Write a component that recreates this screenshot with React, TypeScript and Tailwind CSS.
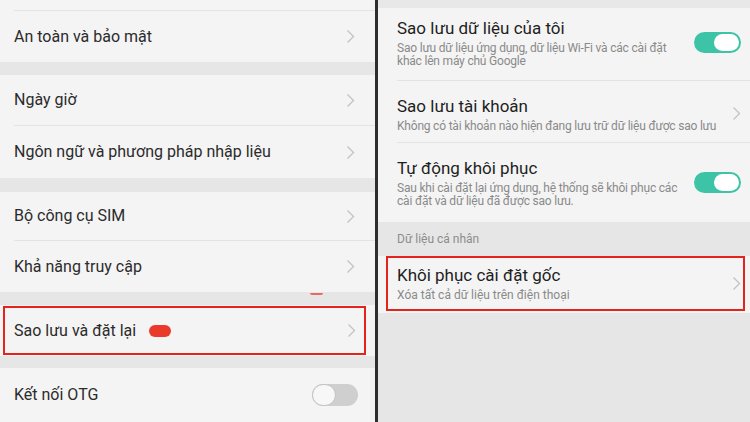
import React from 'react';

const font = { fontFamily: 'Roboto, "Noto Sans", "Liberation Sans", sans-serif' };

const Chevron = ({ className = '' }: { className?: string }) => (
    <svg width="9" height="15" viewBox="0 0 9 15" className={className}>
        <polyline points="1.5,1.5 7.5,7.5 1.5,13.5" fill="none" stroke="#c2c2c2" strokeWidth="1.3" />
    </svg>
);

const ToggleOn = () => (
    <div className="flex h-[21px] w-[47px] items-center justify-end rounded-full bg-[#3dc3a6] p-[2px]">
        <div className="h-[17px] w-[25px] rounded-full bg-white" />
    </div>
);

const ToggleOff = () => (
    <div className="flex h-[22px] w-[46px] items-center rounded-full bg-[#cfcfcf]">
        <div className="h-[22px] w-[24px] rounded-full border border-[#c4c4c4] bg-[#f7f7f7]" />
    </div>
);

const Gap = ({ h }: { h: string }) => <div className={`${h} bg-[#e6e6e6]`} />;

const LeftRow = ({ label, line, h }: { label: string; line?: boolean; h: string }) => (
    <div className={`${h} bg-[#f4f4f4] pl-[14px]`}>
        <div className={`flex h-full items-center justify-between pr-[20px] ${line ? 'border-b border-[#e3e3e3]' : ''}`}>
            <span className="text-[16px] text-[#2b2b2b]">{label}</span>
            <Chevron />
        </div>
    </div>
);

const RightRow = ({ title, sub, toggle, line, h, pad = '' }: { title: string; sub: string[]; toggle?: boolean; line?: boolean; h: string; pad?: string }) => (
    <div className={`${h} bg-[#f4f4f4] pl-[19px]`}>
        <div className={`flex h-full items-center justify-between pr-[9px] ${pad} ${line ? 'border-b border-[#e3e3e3]' : ''}`}>
            <div className="flex flex-col">
                <span className="text-[17px] leading-[22px] text-[#1e1e1e]">{title}</span>
                <div className="mt-[3px] flex flex-col">
                    {sub.map((s) => (
                        <span key={s} className="text-[12px] leading-[13px] tracking-[-0.2px] text-[#8a8a8a]">
                            {s}
                        </span>
                    ))}
                </div>
            </div>
            {toggle ? <ToggleOn /> : <Chevron />}
        </div>
    </div>
);

export default function App() {
    return (
        <div className="flex h-[422px] w-[750px] overflow-hidden bg-[#e6e6e6]" style={font}>
            <div className="flex w-[375px] flex-col">
                <div className="h-[11px] bg-[#f4f4f4] pl-[14px]">
                    <div className="h-full border-b border-[#e3e3e3]" />
                </div>
                <LeftRow label="An toàn và bảo mật" h="h-[51px]" />
                <Gap h="h-[13px]" />
                <LeftRow label="Ngày giờ" line h="h-[51px]" />
                <LeftRow label="Ngôn ngữ và phương pháp nhập liệu" h="h-[52px]" />
                <Gap h="h-[14px]" />
                <LeftRow label="Bộ công cụ SIM" line h="h-[49px]" />
                <LeftRow label="Khả năng truy cập" h="h-[51px]" />
                <div className="relative h-[13px] bg-[#e6e6e6]">
                    <div className="absolute left-[310px] top-[1px] h-[2px] w-[13px] rounded-b-full bg-[#e8352a] opacity-70" />
                </div>
                <div className="h-[51px] bg-[#f4f4f4] py-[1px] pl-[3px] pr-[9px]">
                    <div className="flex h-full items-center justify-between border-2 border-[#e3231c] pl-[9px] pr-[8px]">
                        <div className="flex items-center gap-[13px]">
                            <span className="text-[16px] text-[#2b2b2b]">Sao lưu và đặt lại</span>
                            <div className="h-[12px] w-[22px] rounded-full bg-[#ea3a2c]" />
                        </div>
                        <Chevron />
                    </div>
                </div>
                <Gap h="h-[12px]" />
                <div className="flex h-[54px] items-center justify-between bg-[#f4f4f4] pl-[14px] pr-[17px]">
                    <span className="text-[16px] text-[#2b2b2b]">Kết nối OTG</span>
                    <ToggleOff />
                </div>
            </div>
            <div className="w-[3px] bg-[#2e2e2e]" />
            <div className="flex flex-1 flex-col">
                <div className="h-[8px] bg-[#e8e8e8]" />
                <RightRow
                    title="Sao lưu dữ liệu của tôi"
                    sub={['Sao lưu dữ liệu ứng dụng, dữ liệu Wi-Fi và các cài đặt', 'khác lên máy chủ Google']}
                    toggle
                    line
                    pad="pb-[4px]"
                    h="h-[73px]"
                />
                <RightRow title="Sao lưu tài khoản" sub={['Không có tài khoản nào hiện đang lưu trữ dữ liệu được sao lưu']} line pad="pt-[4px]" h="h-[62px]" />
                <RightRow
                    title="Tự động khôi phục"
                    sub={['Sau khi cài đặt lại ứng dụng, hệ thống sẽ khôi phục các', 'cài đặt và dữ liệu đã được sao lưu.']}
                    toggle
                    h="h-[79px]"
                />
                <div className="flex h-[34px] items-center pl-[19px] text-[12px] text-[#8c8c8c]">Dữ liệu cá nhân</div>
                <div className="h-[57px] bg-[#f4f4f4] pb-[2px] pl-[8px] pr-[5px]">
                    <div className="flex h-full items-center justify-between border-2 border-[#e3231c] pl-[9px] pr-[2px]">
                        <div className="flex flex-col">
                            <span className="text-[17px] leading-[22px] text-[#1e1e1e]">Khôi phục cài đặt gốc</span>
                            <span className="mt-[2px] text-[12px] leading-[15px] text-[#8a8a8a]">Xóa tất cả dữ liệu trên điện thoại</span>
                        </div>
                        <Chevron />
                    </div>
                </div>
            </div>
        </div>
    );
}
